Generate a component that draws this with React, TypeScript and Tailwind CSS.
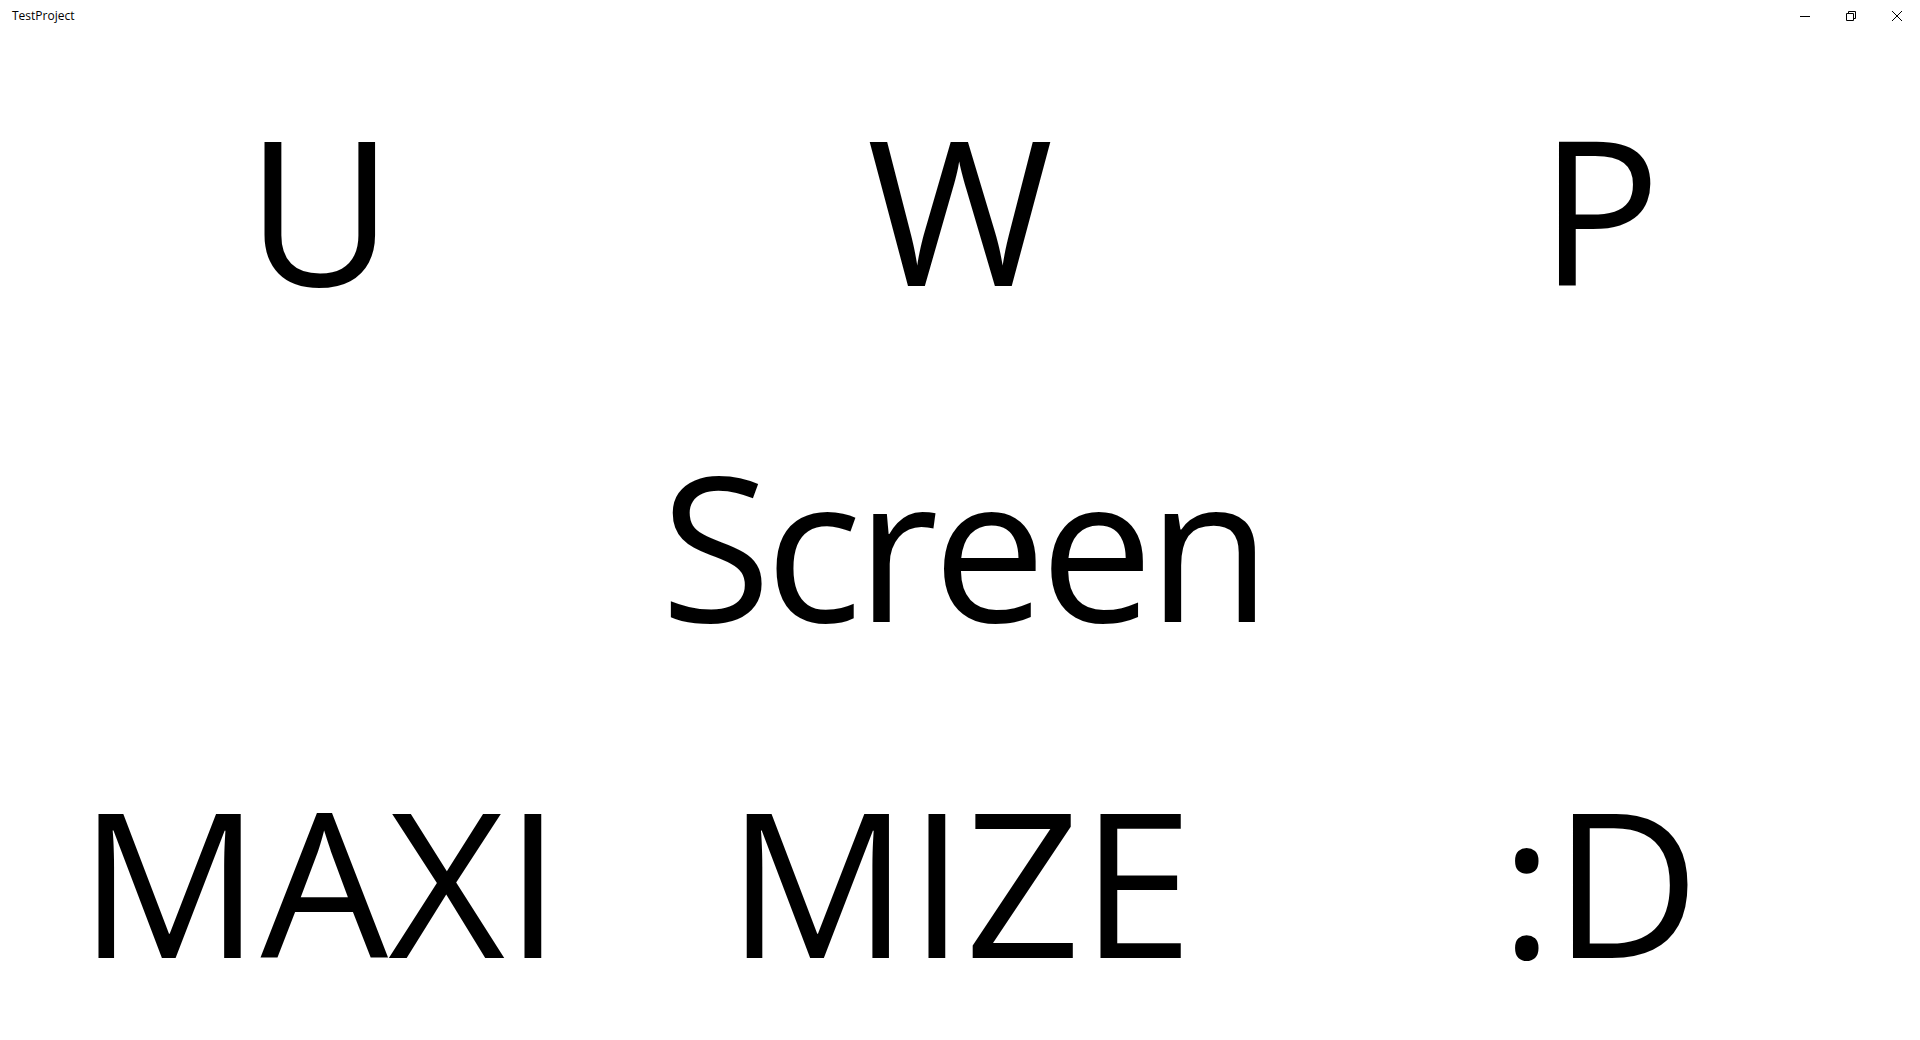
const font = { fontFamily: '"Open Sans", "Noto Sans", sans-serif' };

function CaptionButtons() {
  return (
    <div className="flex h-8">
      <div className="flex h-8 w-[46px] items-center justify-center">
        <svg width="10" height="10" viewBox="0 0 10 10">
          <path d="M0 5.5h10" stroke="#000" strokeWidth="1" />
        </svg>
      </div>
      <div className="flex h-8 w-[46px] items-center justify-center">
        <svg width="10" height="10" viewBox="0 0 10 10" fill="none">
          <path d="M0.5 2.5h7v7h-7z" stroke="#000" strokeWidth="1" />
          <path d="M2.5 2.5v-2h7v7h-2" stroke="#000" strokeWidth="1" />
        </svg>
      </div>
      <div className="flex h-8 w-[46px] items-center justify-center">
        <svg width="10" height="10" viewBox="0 0 10 10">
          <path d="M0 0L10 10M10 0L0 10" stroke="#000" strokeWidth="1" />
        </svg>
      </div>
    </div>
  );
}

function Cell({ text, tight = false }: { text: string; tight?: boolean }) {
  return (
    <div className={`flex items-center justify-center pt-[14px] ${tight ? 'pl-[6px]' : ''}`}>
      <span
        className={`whitespace-nowrap text-[202px] text-black ${tight ? 'tracking-[-6px]' : ''}`}
        style={font}
      >
        {text}
      </span>
    </div>
  );
}

export default function App() {
  return (
    <div className="flex h-[1040px] w-[1920px] flex-col overflow-hidden bg-white">
      <div className="flex h-8 items-center justify-between">
        <div className="pl-3 text-[12px] text-black" style={font}>
          TestProject
        </div>
        <CaptionButtons />
      </div>
      <div className="grid flex-1 grid-cols-3 grid-rows-3">
        <Cell text="U" />
        <Cell text="W" />
        <Cell text="P" />
        <div />
        <Cell text="Screen" tight />
        <div />
        <Cell text="MAXI" />
        <Cell text="MIZE" />
        <Cell text=":D" />
      </div>
    </div>
  );
}
